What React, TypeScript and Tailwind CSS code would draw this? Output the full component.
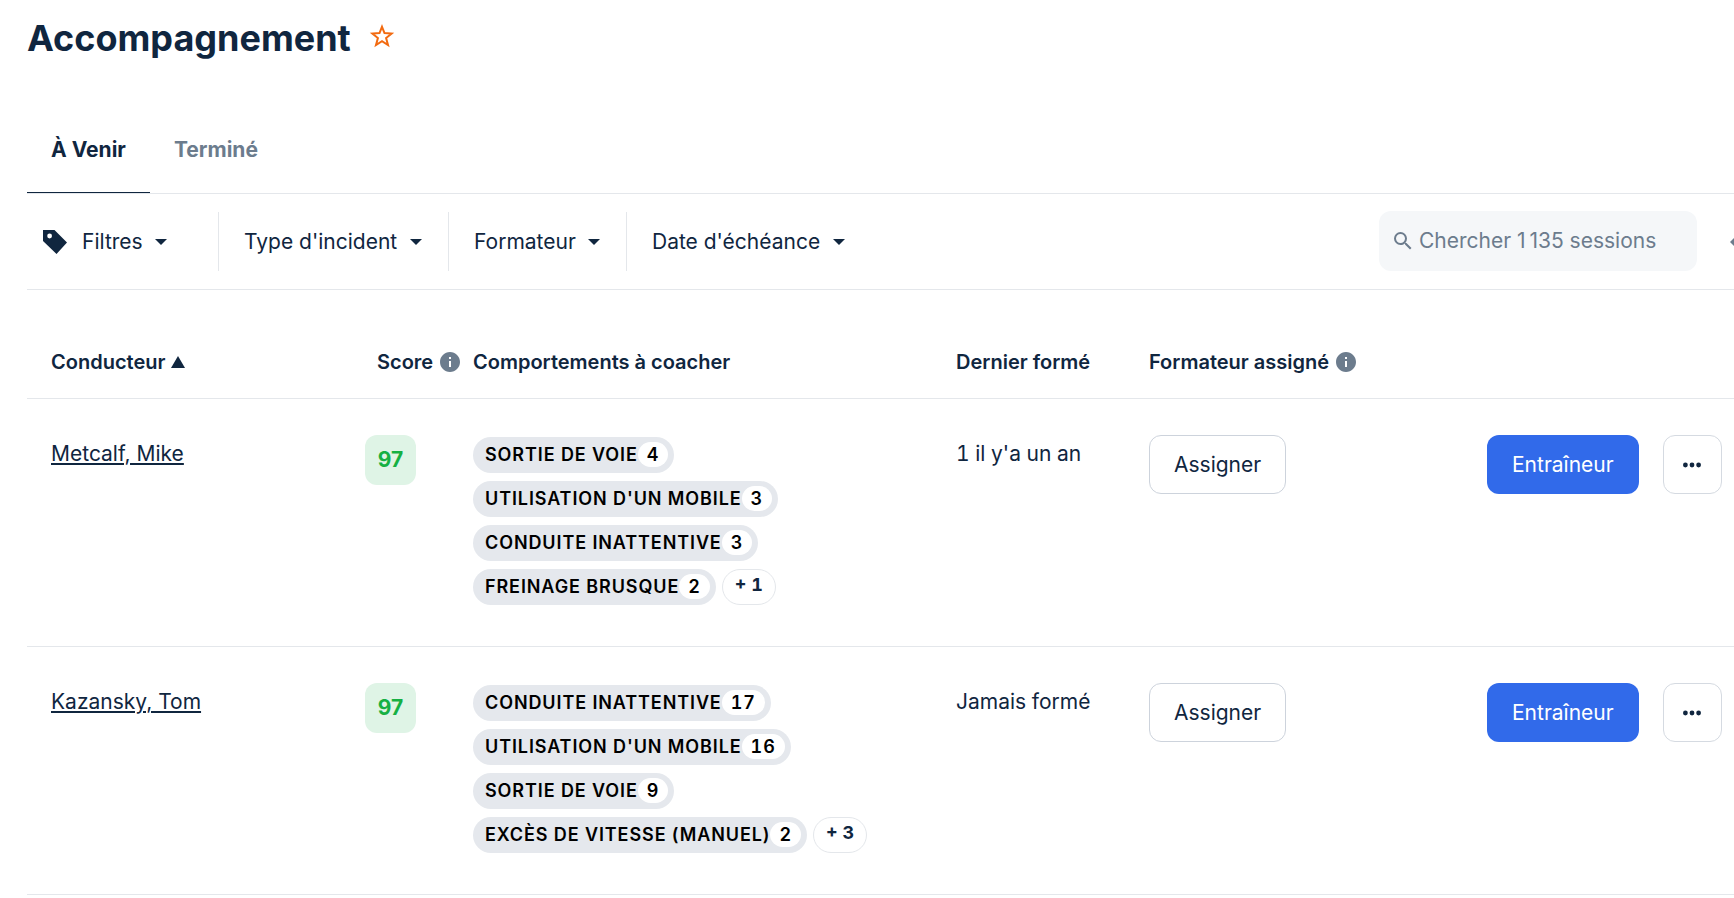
import React from 'react';
import { MdInfo, MdSearch } from 'react-icons/md';

interface Behavior {
  label: string;
  count: number;
}

interface Session {
  id: number;
  driver: string;
  score: number;
  behaviors: Behavior[];
  more: number;
  lastCoached: string;
}

const sessions: Session[] = [
  {
    id: 1,
    driver: 'Metcalf, Mike',
    score: 97,
    behaviors: [
      { label: 'Sortie de voie', count: 4 },
      { label: "Utilisation d'un mobile", count: 3 },
      { label: 'Conduite inattentive', count: 3 },
      { label: 'Freinage brusque', count: 2 },
    ],
    more: 1,
    lastCoached: "1 il y'a un an",
  },
  {
    id: 2,
    driver: 'Kazansky, Tom',
    score: 97,
    behaviors: [
      { label: 'Conduite inattentive', count: 17 },
      { label: "Utilisation d'un mobile", count: 16 },
      { label: 'Sortie de voie', count: 9 },
      { label: 'Excès de vitesse (manuel)', count: 2 },
    ],
    more: 3,
    lastCoached: 'Jamais formé',
  },
];

const Caret: React.FC = () => (
  <svg viewBox="0 0 12 6" className="h-[6px] w-3 shrink-0 fill-current" aria-hidden="true">
    <path d="M0 0h12L6 6z" />
  </svg>
);

const FilterSelect: React.FC<{ id: string; label: string }> = ({ id, label }) => (
  <div className="flex h-[59px] items-center gap-3 border-l border-[#e4e7eb] pr-[26px] pl-[25px]">
    <select id={id} aria-label={label} className="appearance-none bg-transparent">
      <option>{label}</option>
    </select>
    <Caret />
  </div>
);

const BehaviorPill: React.FC<{ behavior: Behavior }> = ({ behavior }) => (
  <span className="flex h-9 items-center rounded-full bg-[#e5e8ed] pr-[6px] pl-3 text-lg leading-6 font-semibold tracking-wider text-black uppercase">
    {behavior.label}
    <span className="flex h-[25px] items-center rounded-full bg-white px-[9px] tabular-nums">{behavior.count}</span>
  </span>
);

const SessionRow: React.FC<{ session: Session }> = ({ session }) => (
  <tr className="h-[248px] border-b border-[#e4e7eb] align-top">
    <td className="pt-[41px] pl-6">
      <a href="#" className="underline decoration-2 underline-offset-2">{session.driver}</a>
    </td>
    <td className="pt-9">
      <div className="flex h-[50px] w-[51px] items-center justify-center rounded-xl bg-[#dff4e6] font-bold text-[#16b043]">
        {session.score}
      </div>
    </td>
    <td className="pt-[38px]">
      <ul className="flex flex-col gap-2">
        {session.behaviors.map((behavior, index) => (
          <li key={behavior.label} className="flex gap-[6px]">
            <BehaviorPill behavior={behavior} />
            {index === session.behaviors.length - 1 && (
              <button className="h-9 rounded-full border border-[#e4e7eb] px-3 pb-1 text-lg leading-6 font-bold tabular-nums">
                + {session.more}
              </button>
            )}
          </li>
        ))}
      </ul>
    </td>
    <td className="pt-[41px] tabular-nums">{session.lastCoached}</td>
    <td className="pt-9">
      <button className="h-[59px] rounded-xl border border-[#cdd3dc] px-6 pt-[2px]">Assigner</button>
    </td>
    <td className="pt-9">
      <div className="flex gap-6">
        <button className="h-[59px] rounded-xl bg-[#316aea] px-[25px] pt-[2px] text-white">Entraîneur</button>
        <button
          aria-label="Plus d'actions"
          className="flex h-[59px] w-[59px] items-center justify-center rounded-xl border border-[#d5dae1] pt-[2px]"
        >
          <svg viewBox="0 0 20 6" className="h-[6px] w-5 fill-current" aria-hidden="true">
            <circle cx="3.4" cy="3" r="2.4" />
            <circle cx="10" cy="3" r="2.4" />
            <circle cx="16.6" cy="3" r="2.4" />
          </svg>
        </button>
      </div>
    </td>
  </tr>
);

const App: React.FC = () => {
  return (
    <main className="overflow-hidden bg-white pl-[27px] font-['Inter',sans-serif] text-[21px] leading-7 text-[#10263f]">
      <header className="flex h-[76px] items-center gap-[18px]">
        <h1 className="text-4xl leading-[48px] font-bold">Accompagnement</h1>
        <button aria-label="Ajouter aux favoris" className="pb-1">
          <svg viewBox="0 0 26 26" className="h-[26px] w-[26px] fill-none stroke-[#f26a10] stroke-2" aria-hidden="true">
            <path d="M13 3.8l2.5 6.3 7.1.5-5.5 4.4 1.9 7-6-3.9-6 3.9 1.9-7-5.5-4.4 7.1-.5z" />
          </svg>
        </button>
      </header>

      {/* Tabs */}
      <div role="tablist" className="mt-[27px] flex h-[91px] border-b border-[#e4e7eb] font-bold">
        <button role="tab" aria-selected="true" className="border-b border-[#10263f] px-6 pt-1">À Venir</button>
        <button role="tab" aria-selected="false" className="px-6 pt-1 text-[#6c7c8d]">Terminé</button>
      </div>

      {/* Filters */}
      <div className="flex h-[96px] items-center border-b border-[#e4e7eb]">
        <button className="flex w-[191px] items-center pl-4" aria-haspopup="menu">
          <svg viewBox="0 0 24 24" className="mr-[15px] h-6 w-6 fill-current" aria-hidden="true">
            <path fillRule="evenodd" d="M0 0h11.5L24 12.5 13.5 24 0 11zM6.6 3.6a2.4 2.4 0 100 4.8 2.4 2.4 0 000-4.8z" />
          </svg>
          <span className="mr-3">Filtres</span>
          <Caret />
        </button>
        <FilterSelect id="incident" label="Type d'incident" />
        <FilterSelect id="coach" label="Formateur" />
        <FilterSelect id="due" label="Date d'échéance" />
        <label className="mt-[17px] ml-auto flex h-[60px] w-[318px] items-center gap-1 self-start rounded-xl bg-[#f5f7f9] px-3 text-[#6c7c8d]">
          <MdSearch className="h-6 w-6 shrink-0" />
          <input
            type="search"
            aria-label="Chercher des sessions"
            placeholder={'Chercher 1\u202f135 sessions'}
            className="w-full bg-transparent outline-none placeholder:text-[#6c7c8d]"
          />
        </label>
        <button aria-label="Précédent" className="flex w-[37px] overflow-hidden pl-8 text-[#6c7c8d]">
          <svg viewBox="0 0 10 12" className="h-3 w-[10px] shrink-0 fill-current" aria-hidden="true">
            <path d="M1 6l5-5 2 1v8l-2 1z" />
          </svg>
        </button>
      </div>

      <table className="w-full table-fixed">
        <colgroup>
          <col className="w-[338px]" />
          <col className="w-[108px]" />
          <col className="w-[483px]" />
          <col className="w-[193px]" />
          <col />
          <col className="w-[247px]" />
        </colgroup>
        <thead>
          <tr className="h-[108px] border-b border-[#e4e7eb] text-left text-xl leading-6">
            <th className="pt-9 pl-6 font-semibold">
              <button className="flex items-center gap-[6px]">
                Conducteur
                <svg viewBox="0 0 14 12" className="h-3 w-[14px] fill-current" aria-hidden="true">
                  <path d="M7 0l7 12H0z" />
                </svg>
              </button>
            </th>
            <th className="pt-9 pl-3 font-semibold">
              <span className="flex items-center gap-[5px]">
                Score
                <MdInfo className="h-6 w-6 shrink-0 text-[#6c7c8d]" />
              </span>
            </th>
            <th className="pt-9 font-semibold">Comportements à coacher</th>
            <th className="pt-9 font-semibold">Dernier formé</th>
            <th className="pt-9 font-semibold">
              <span className="flex items-center gap-[5px]">
                Formateur assigné
                <MdInfo className="h-6 w-6 shrink-0 text-[#6c7c8d]" />
              </span>
            </th>
            <th aria-label="Actions"></th>
          </tr>
        </thead>
        <tbody>
          {sessions.map(session => (
            <SessionRow key={session.id} session={session} />
          ))}
        </tbody>
      </table>
    </main>
  );
};

export default App;
